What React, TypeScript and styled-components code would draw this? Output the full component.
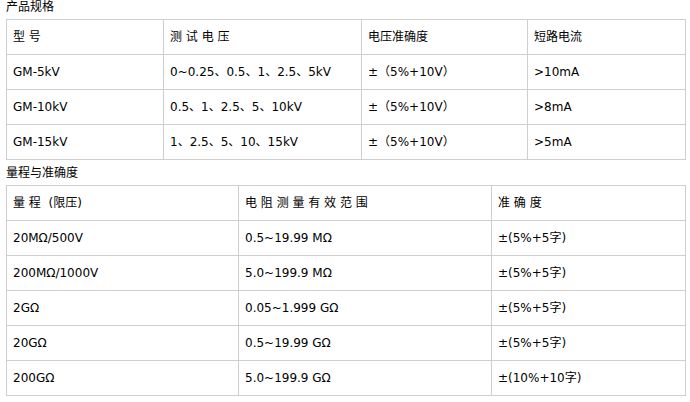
import React from "react";
import styled, { createGlobalStyle } from "styled-components";

const Global = createGlobalStyle`
  html, body { margin: 0; padding: 0; background: #fff; }
  body {
    font-family: "DejaVu Sans", "Noto Sans CJK SC", sans-serif;
    font-size: 12px;
    color: #000;
  }
`;

const Page = styled.div`
  padding: 0 0 0 6px;
  width: 679px;
`;

const Title = styled.div<{ $gap?: number }>`
  height: 19px;
  line-height: 15px;
  margin-top: ${(p) => p.$gap ?? 0}px;
  font-size: 12px;
  color: #000;
`;

const Table = styled.table`
  width: 679px;
  border-collapse: collapse;
  table-layout: fixed;
`;

const Row = styled.tr`
  height: 35px;
`;

const Cell = styled.td`
  border: 1px solid #cfcfcf;
  padding: 0 0 0 6px;
  vertical-align: middle;
  white-space: pre;
  font-size: 12px;
  line-height: 16px;
  color: #000;
`;

const specCols = [157, 198, 166, 158];
const specHead = ["型 号", "测 试 电 压", "电压准确度", "短路电流"];
const specRows = [
  ["GM-5kV", "0~0.25、0.5、1、2.5、5kV", "±（5%+10V）", ">10mA"],
  ["GM-10kV", "0.5、1、2.5、5、10kV", "±（5%+10V）", ">8mA"],
  ["GM-15kV", "1、2.5、5、10、15kV", "±（5%+10V）", ">5mA"],
];

const rangeCols = [232, 253, 194];
const rangeHead = ["量 程  (限压)", "电 阻 测 量 有 效 范 围", "准 确 度"];
const rangeRows = [
  ["20MΩ/500V", "0.5~19.99 MΩ", "±(5%+5字)"],
  ["200MΩ/1000V", "5.0~199.9 MΩ", "±(5%+5字)"],
  ["2GΩ", "0.05~1.999 GΩ", "±(5%+5字)"],
  ["20GΩ", "0.5~19.99 GΩ", "±(5%+5字)"],
  ["200GΩ", "5.0~199.9 GΩ", "±(10%+10字)"],
];

function DataTable({ cols, head, rows }: { cols: number[]; head: string[]; rows: string[][] }) {
  return (
    <Table>
      <colgroup>
        {cols.map((w, i) => (
          <col key={i} style={{ width: w }} />
        ))}
      </colgroup>
      <tbody>
        <Row>
          {head.map((h, i) => (
            <Cell key={i}>{h}</Cell>
          ))}
        </Row>
        {rows.map((r, i) => (
          <Row key={i}>
            {r.map((c, j) => (
              <Cell key={j}>{c}</Cell>
            ))}
          </Row>
        ))}
      </tbody>
    </Table>
  );
}

export default function App() {
  return (
    <>
      <Global />
      <Page>
        <Title>产品规格</Title>
        <DataTable cols={specCols} head={specHead} rows={specRows} />
        <Title $gap={6}>量程与准确度</Title>
        <DataTable cols={rangeCols} head={rangeHead} rows={rangeRows} />
      </Page>
    </>
  );
}
